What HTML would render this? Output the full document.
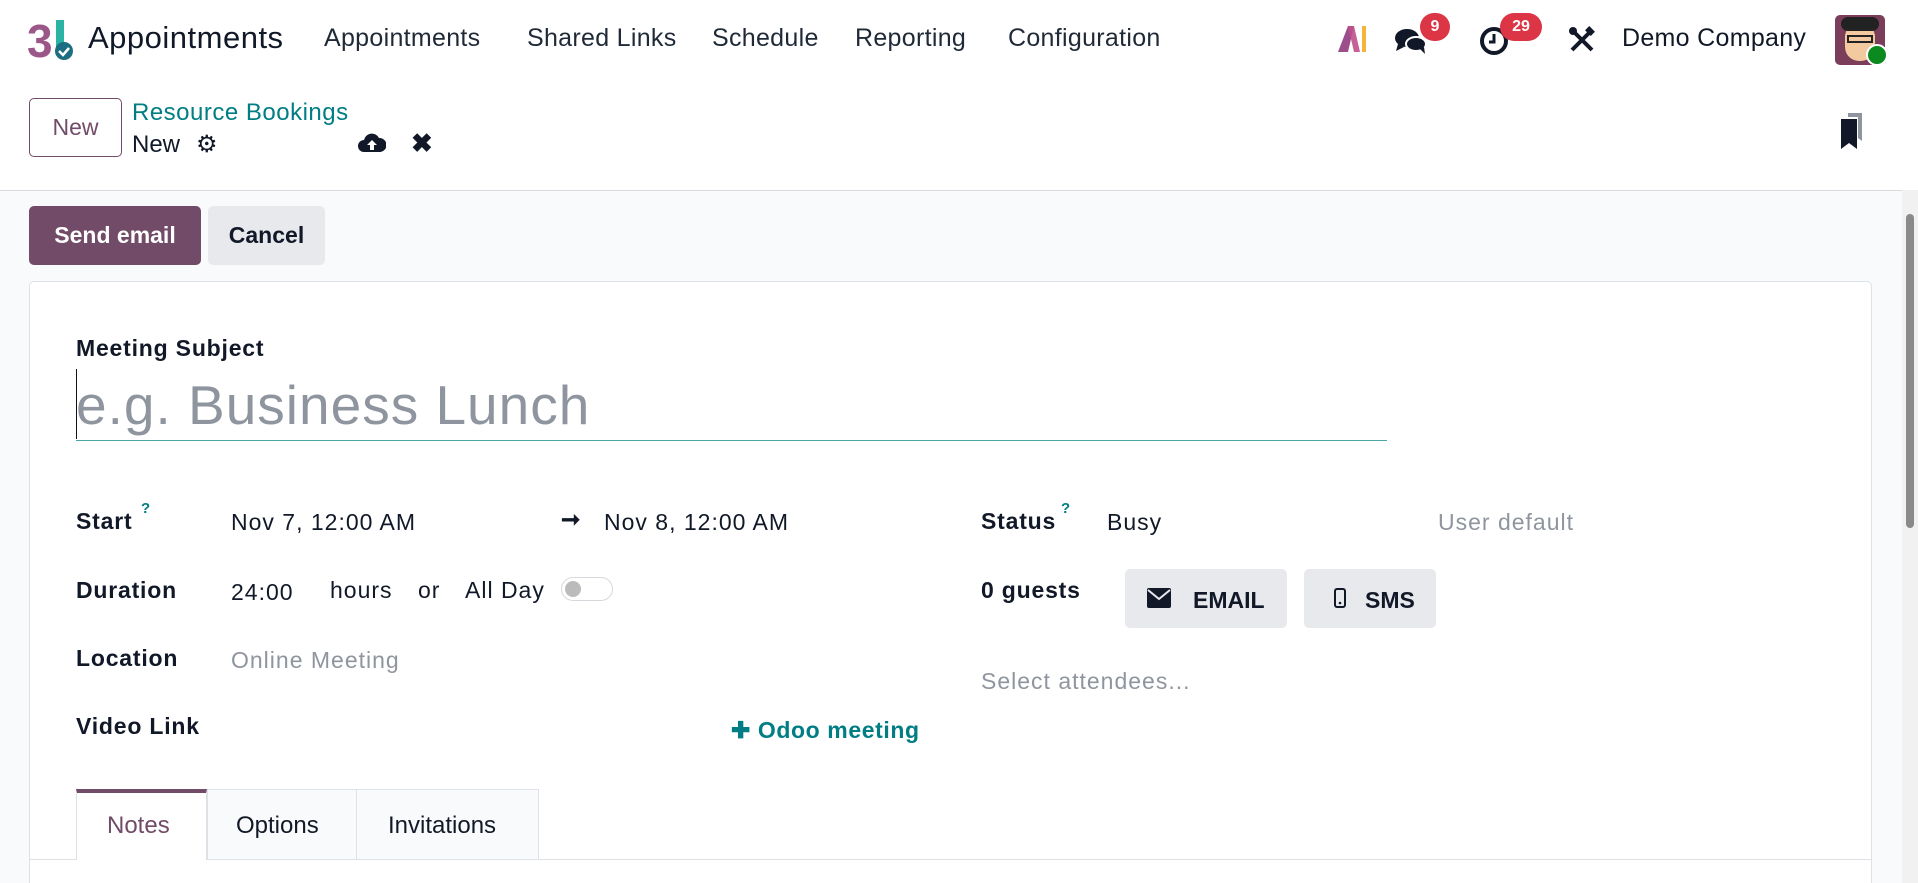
<!DOCTYPE html>
<html><head><meta charset="utf-8"><style>
*{box-sizing:border-box;margin:0;padding:0}
html,body{width:1918px;height:883px;overflow:hidden}
body{background:#fff;font-family:"Liberation Sans",sans-serif;color:#1f2937;position:relative}
.a{position:absolute;white-space:nowrap}
.nav{font-size:25px;color:#1f2937;top:24px;letter-spacing:.3px}
.lbl{font-weight:bold;font-size:23px;color:#111827;letter-spacing:.8px}
.val{font-size:23px;color:#111827;letter-spacing:1px}
.badge{position:absolute;background:#dc3545;color:#fff;font-weight:bold;font-size:16px;border-radius:14px;height:28px;line-height:28px;text-align:center}
</style></head><body>
<svg class="a" style="left:27px;top:17px" width="50" height="44" viewBox="0 0 50 44">
<text x="0" y="40" font-family="Liberation Sans" font-weight="bold" font-size="46" fill="#9c5789">3</text>
<rect x="29" y="3" width="8" height="28" fill="#2bb3a3"/>
<circle cx="37" cy="34" r="9" fill="#1c6e80"/>
<path d="M32 34l4 4 6-7" stroke="#fff" stroke-width="2.5" fill="none"/>
</svg>
<div class="a" style="left:88px;top:20px;font-size:31px;color:#111827;letter-spacing:.5px">Appointments</div>
<div class="a nav" style="left:324px">Appointments</div>
<div class="a nav" style="left:527px">Shared Links</div>
<div class="a nav" style="left:712px">Schedule</div>
<div class="a nav" style="left:855px">Reporting</div>
<div class="a nav" style="left:1008px">Configuration</div>
<svg class="a" style="left:1336px;top:24px" width="32" height="30" viewBox="0 0 32 30"><path d="M2 28L12 2h6l-6 26z" fill="#9c4d8c"/><path d="M12 2h6l6 26h-6z" fill="#c0508a" opacity=".9"/><rect x="26" y="2" width="4" height="26" fill="#f7b43c"/></svg>
<svg class="a" style="left:1394px;top:26px" width="34" height="30" viewBox="0 0 34 30"><ellipse cx="13" cy="12" rx="12" ry="9" fill="#111827"/><path d="M4 18l-2 7 8-4z" fill="#111827"/><ellipse cx="22" cy="18" rx="10" ry="7" fill="#111827" stroke="#fff" stroke-width="2"/><path d="M26 23l5 5-1-7z" fill="#111827"/></svg>
<div class="badge" style="left:1420px;top:13px;width:30px">9</div>
<svg class="a" style="left:1479px;top:24px" width="32" height="32" viewBox="0 0 32 32"><circle cx="15" cy="17" r="12" stroke="#111827" stroke-width="4" fill="none"/><path d="M15 10v8h-5" stroke="#111827" stroke-width="3" fill="none"/></svg>
<div class="badge" style="left:1500px;top:13px;width:42px">29</div>
<svg class="a" style="left:1568px;top:26px" width="28" height="28" viewBox="0 0 28 28"><path d="M4 4l20 20M24 4L4 24" stroke="#111827" stroke-width="4"/><circle cx="5" cy="5" r="4" fill="#111827"/><rect x="18" y="2" width="8" height="6" transform="rotate(45 22 5)" fill="#111827"/></svg>
<div class="a" style="left:1622px;top:24px;font-size:25px;color:#111827;letter-spacing:.3px">Demo Company</div>
<div class="a" style="left:1835px;top:15px;width:50px;height:50px;border-radius:5px;background:#7a3d5a;overflow:hidden">
<div style="position:absolute;left:10px;top:8px;width:30px;height:38px;border-radius:14px;background:#f3c9a0"></div>
<div style="position:absolute;left:6px;top:2px;width:38px;height:14px;border-radius:8px;background:#222"></div>
<div style="position:absolute;left:12px;top:20px;width:26px;height:8px;border:2px solid #222"></div>
</div>
<div class="a" style="left:1866px;top:44px;width:22px;height:22px;border-radius:50%;background:#0a8a1f;border:2px solid #fff"></div>
<div class="a" style="left:29px;top:98px;width:93px;height:59px;border:1px solid #714b67;border-radius:5px;color:#714b67;font-size:23px;text-align:center;line-height:57px">New</div>
<div class="a" style="left:132px;top:99px;font-size:24px;color:#017e84;letter-spacing:.5px">Resource Bookings</div>
<div class="a" style="left:132px;top:131px;font-size:24px;color:#111827">New</div>
<div class="a" style="left:196px;top:130px;font-size:24px;color:#111827">⚙</div>
<svg class="a" style="left:358px;top:132px" width="28" height="22" viewBox="0 0 28 22"><path d="M6 20a6 6 0 010-12 8 8 0 0115-2 6 6 0 011 14z" fill="#111827"/><path d="M14 8l-5 5h3v5h4v-5h3z" fill="#fff"/></svg>
<div class="a" style="left:411px;top:128px;font-size:26px;font-weight:bold;color:#111827">✖</div>
<svg class="a" style="left:1840px;top:113px" width="24" height="36" viewBox="0 0 24 36"><path d="M8 0h14v28l-4-3V4H8z" fill="#8f959e"/><path d="M1 6h16v30l-8-6-8 6z" fill="#111827"/></svg>
<div class="a" style="left:0;top:190px;width:1918px;height:693px;background:#f9fafb;border-top:1px solid #d8dadd"></div>
<div class="a" style="left:29px;top:206px;width:172px;height:59px;background:#714b67;border-radius:5px;color:#fff;font-weight:bold;font-size:23px;text-align:center;line-height:59px">Send email</div>
<div class="a" style="left:208px;top:206px;width:117px;height:59px;background:#e7e9ed;border-radius:5px;color:#111827;font-weight:bold;font-size:23px;text-align:center;line-height:59px">Cancel</div>
<div class="a" style="left:1902px;top:190px;width:16px;height:693px;background:#f1f1f1"></div>
<div class="a" style="left:1906px;top:214px;width:8px;height:314px;background:#8a8a8a;border-radius:4px"></div>
<div class="a" style="left:29px;top:281px;width:1843px;height:602px;background:#fff;border:1px solid #dee2e6;border-bottom:none;border-radius:5px 5px 0 0"></div>
<div class="a lbl" style="left:76px;top:335px">Meeting Subject</div>
<div class="a" style="left:76px;top:373px;font-size:55px;color:#8f959e;letter-spacing:1px">e.g. Business Lunch</div>
<div class="a" style="left:76px;top:369px;width:1px;height:70px;background:#111"></div>
<div class="a" style="left:76px;top:440px;width:1311px;height:1px;background:#4aa5a6"></div>
<div class="a lbl" style="left:76px;top:508px">Start</div>
<div class="a" style="left:141px;top:500px;font-size:15px;color:#017e84;font-weight:bold">?</div>
<div class="a val" style="left:231px;top:509px">Nov 7, 12:00 AM</div>
<div class="a val" style="left:561px;top:506px;font-weight:bold">➞</div>
<div class="a val" style="left:604px;top:509px">Nov 8, 12:00 AM</div>
<div class="a lbl" style="left:76px;top:577px">Duration</div>
<div class="a val" style="left:231px;top:579px">24:00</div>
<div class="a val" style="left:330px;top:577px">hours</div>
<div class="a val" style="left:418px;top:577px">or</div>
<div class="a val" style="left:465px;top:577px">All Day</div>
<div class="a" style="left:561px;top:577px;width:52px;height:24px;border:1px solid #d5d8dc;border-radius:12px"></div>
<div class="a" style="left:565px;top:581px;width:16px;height:16px;border-radius:50%;background:#bbb"></div>
<div class="a lbl" style="left:76px;top:645px">Location</div>
<div class="a val" style="left:231px;top:647px;color:#8f959e">Online Meeting</div>
<div class="a lbl" style="left:76px;top:713px">Video Link</div>
<div class="a" style="left:731px;top:717px;font-size:23px;font-weight:bold;color:#017e84;letter-spacing:.6px">✚ Odoo meeting</div>
<div class="a lbl" style="left:981px;top:508px">Status</div>
<div class="a" style="left:1061px;top:500px;font-size:15px;color:#017e84;font-weight:bold">?</div>
<div class="a val" style="left:1107px;top:509px">Busy</div>
<div class="a val" style="left:1438px;top:509px;color:#8f959e">User default</div>
<div class="a lbl" style="left:981px;top:577px">0 guests</div>
<div class="a" style="left:1125px;top:569px;width:162px;height:59px;background:#e7e9ed;border-radius:5px"></div>
<svg class="a" style="left:1147px;top:588px" width="24" height="20" viewBox="0 0 24 20"><rect x="0" y="0" width="24" height="20" rx="2" fill="#111827"/><path d="M1 2l11 9 11-9" stroke="#e7e9ed" stroke-width="2" fill="none"/></svg>
<div class="a" style="left:1193px;top:587px;font-size:23px;font-weight:bold;color:#111827">EMAIL</div>
<div class="a" style="left:1304px;top:569px;width:132px;height:59px;background:#e7e9ed;border-radius:5px"></div>
<svg class="a" style="left:1334px;top:588px" width="12" height="20" viewBox="0 0 12 20"><rect x="1" y="1" width="10" height="18" rx="2" stroke="#111827" stroke-width="2" fill="none"/><circle cx="6" cy="15" r="1.3" fill="#111827"/></svg>
<div class="a" style="left:1365px;top:587px;font-size:23px;font-weight:bold;color:#111827">SMS</div>
<div class="a val" style="left:981px;top:668px;color:#8f959e">Select attendees...</div>
<div class="a" style="left:30px;top:859px;width:1842px;height:1px;background:#dee2e6"></div>
<div class="a" style="left:76px;top:789px;width:131px;height:71px;background:#fff;border-left:1px solid #dee2e6;border-right:1px solid #dee2e6;border-top:4px solid #714b67"></div>
<div class="a" style="left:207px;top:789px;width:150px;height:70px;background:#f9fafb;border:1px solid #dee2e6;border-bottom:none"></div>
<div class="a" style="left:357px;top:789px;width:182px;height:70px;background:#f9fafb;border:1px solid #dee2e6;border-bottom:none;border-left:none"></div>
<div class="a" style="left:107px;top:812px;font-size:24px;color:#714b67">Notes</div>
<div class="a" style="left:236px;top:812px;font-size:24px;color:#111827">Options</div>
<div class="a" style="left:388px;top:812px;font-size:24px;color:#111827">Invitations</div>
</body></html>
